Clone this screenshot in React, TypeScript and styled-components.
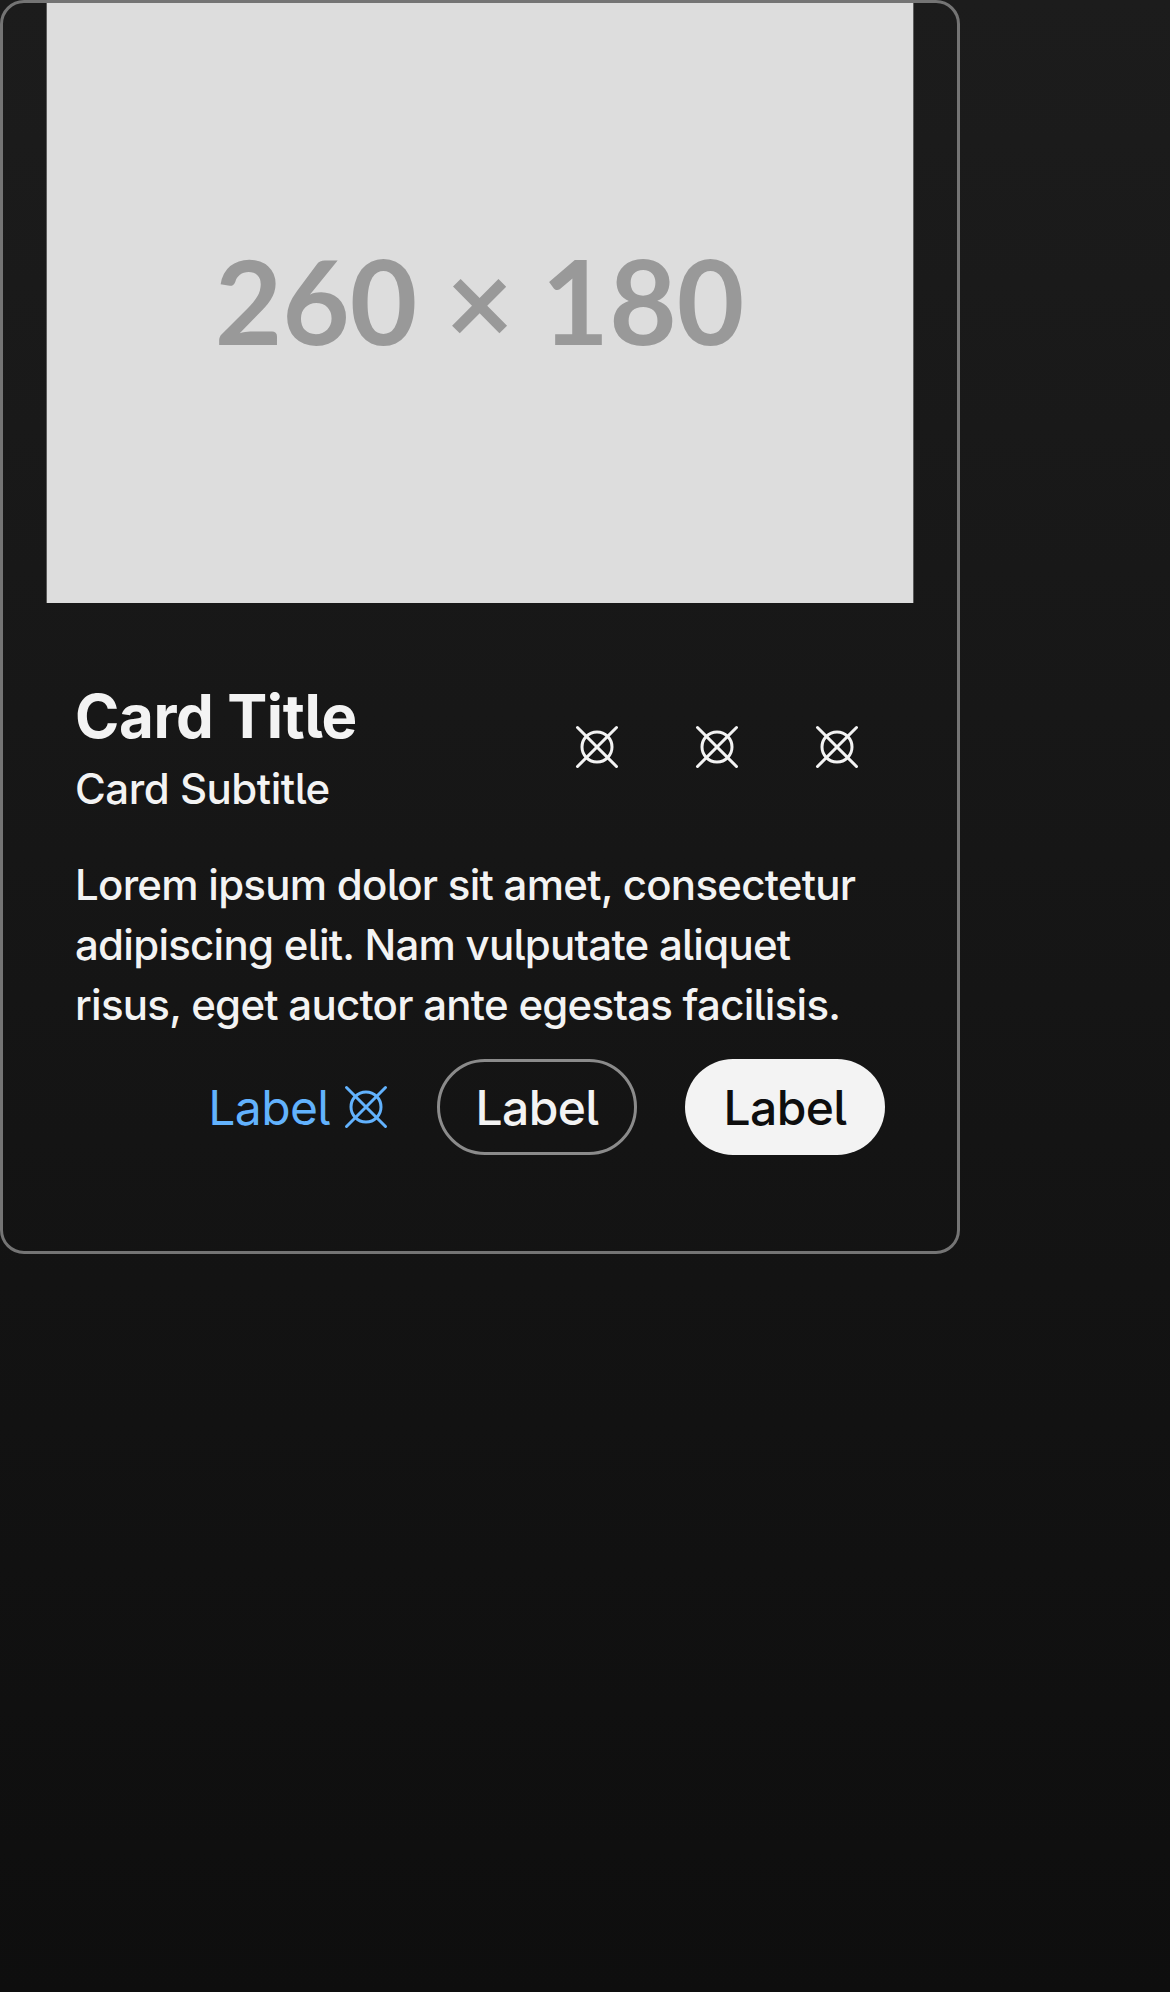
import React from "react";
import styled, { createGlobalStyle } from "styled-components";

const GlobalStyle = createGlobalStyle`
  *, *::before, *::after { box-sizing: border-box; }
  body {
    margin: 0;
    background: #0e0e0e;
    font-family: Inter, "Liberation Sans", sans-serif;
    font-feature-settings: "cv05";
    color: #f3f3f3;
  }
`;

const Page = styled.main`
  width: 100%;
  min-height: 1992px;
  background: linear-gradient(180deg, #1c1c1c 0%, #0e0e0e 100%);
`;

const Card = styled.article`
  display: flex;
  flex-direction: column;
  width: 960px;
  height: 1254px;
  border: 3px solid #747474;
  border-radius: 24px;
`;

const Media = styled.svg`
  display: block;
  flex: none;
  align-self: center;
  width: 868px;
  height: 600px;
`;

const MediaText = styled.text`
  font: 700 116.5px Lato, sans-serif;
  font-feature-settings: normal;
  text-anchor: middle;
  fill: #999999;
`;

const Content = styled.div`
  display: flex;
  flex-direction: column;
  padding: 77px 72px 0 72px;
`;

const Header = styled.header`
  display: flex;
  justify-content: space-between;
  height: 133px;
`;

const Title = styled.h2`
  margin: 0;
  font-size: 60px;
  font-weight: 700;
  line-height: 72px;
  letter-spacing: -0.4px;
`;

const Subtitle = styled.h3`
  margin: 0;
  padding-top: 7px;
  font-size: 42px;
  font-weight: 500;
  line-height: 60px;
  letter-spacing: -0.47px;
`;

const Actions = styled.div`
  display: flex;
  gap: 72px;
  padding: 43px 24px 0 0;
`;

const Body = styled.p`
  margin: 0;
  padding-top: 42px;
  font-size: 42px;
  font-weight: 500;
  line-height: 60px;
  letter-spacing: -0.74px;
  white-space: pre-line;
`;

const Footer = styled.footer`
  display: flex;
  justify-content: flex-end;
  align-items: center;
  gap: 48px;
  padding-top: 24px;
`;

const Button = styled.button<{ $kind: "link" | "outline" | "solid" }>`
  display: flex;
  align-items: center;
  justify-content: center;
  gap: 12px;
  width: ${(p) => (p.$kind === "link" ? "auto" : "200px")};
  height: 96px;
  margin-right: ${(p) => (p.$kind === "link" ? "-1px" : "0")};
  padding: 0;
  border: ${(p) => (p.$kind === "outline" ? "3px solid #8b8b8b" : "0")};
  border-radius: 48px;
  background: ${(p) => (p.$kind === "solid" ? "#f3f3f3" : "transparent")};
  color: ${(p) => ({ link: "#62b2fd", outline: "#f3f3f3", solid: "#0e0e0e" })[p.$kind]};
  font: ${(p) => (p.$kind === "link" ? 400 : 500)} 48px/60px Inter, sans-serif;
  font-feature-settings: "cv05";
  letter-spacing: -0.6px;
`;

const ButtonLabel = styled.span`
  padding-top: 2px;
`;

const Glyph = styled.svg`
  display: block;
  width: 48px;
  height: 48px;
  fill: none;
  stroke: currentColor;
  stroke-width: 3;
  stroke-linecap: round;
`;

const PlaceholderIcon = () => (
  <Glyph viewBox="0 0 48 48" aria-hidden="true">
    <circle cx="24" cy="24" r="15" />
    <path d="M4.5 4.5L43.5 43.5M43.5 4.5L4.5 43.5" />
  </Glyph>
);

export default function App() {
  return (
    <Page>
      <GlobalStyle />
      <Card>
        <Media viewBox="0 0 868 600">
          <rect x="0.67" width="866.67" height="600" fill="#dddddd" />
          <MediaText x="433.5" y="342.3">
            260 × 180
          </MediaText>
        </Media>
        <Content>
          <Header>
            <div>
              <Title>Card Title</Title>
              <Subtitle>Card Subtitle</Subtitle>
            </div>
            <Actions>
              <PlaceholderIcon />
              <PlaceholderIcon />
              <PlaceholderIcon />
            </Actions>
          </Header>
          <Body>
            {"Lorem ipsum dolor sit amet, consectetur\nadipiscing elit. Nam vulputate aliquet\nrisus, eget auctor ante egestas facilisis."}
          </Body>
          <Footer>
            <Button $kind="link">
              <ButtonLabel>Label</ButtonLabel>
              <PlaceholderIcon />
            </Button>
            <Button $kind="outline">
              <ButtonLabel>Label</ButtonLabel>
            </Button>
            <Button $kind="solid">
              <ButtonLabel>Label</ButtonLabel>
            </Button>
          </Footer>
        </Content>
      </Card>
    </Page>
  );
}
